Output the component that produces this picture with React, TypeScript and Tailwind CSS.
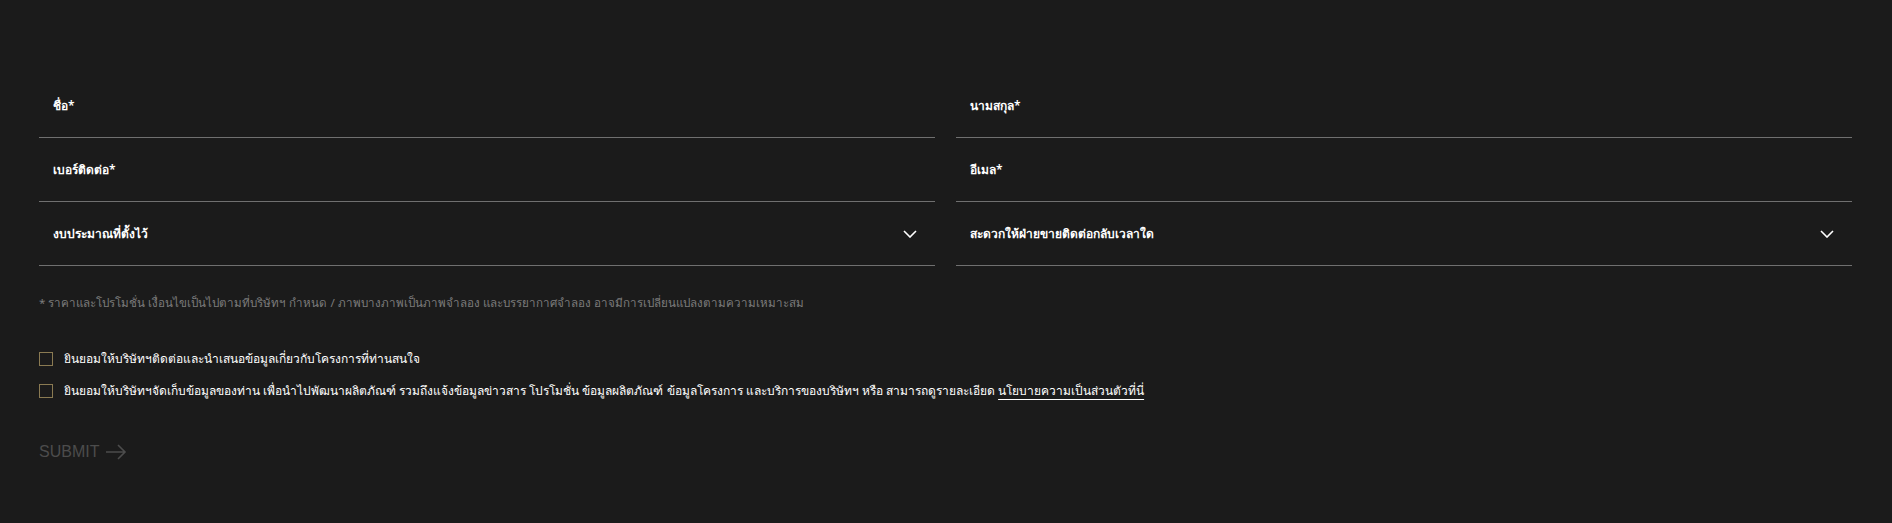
import React from 'react';

const fields = [
  { label: 'ชื่อ*', select: false },
  { label: 'นามสกุล*', select: false },
  { label: 'เบอร์ติดต่อ*', select: false },
  { label: 'อีเมล*', select: false },
  { label: 'งบประมาณที่ตั้งไว้', select: true },
  { label: 'สะดวกให้ฝ่ายขายติดต่อกลับเวลาใด', select: true },
];

function Chevron() {
  return (
    <svg width="14" height="8" viewBox="0 0 14 8" fill="none" className="shrink-0">
      <path d="M1 1l6 6 6-6" stroke="#ffffff" strokeWidth="1.6" />
    </svg>
  );
}

function Checkbox({ children }: { children: React.ReactNode }) {
  return (
    <label className="flex items-center gap-[11px]">
      <span className="w-[14px] h-[14px] border border-[#8a7a52] shrink-0" />
      <span className="text-[12px] text-white font-medium leading-5">{children}</span>
    </label>
  );
}

export default function App() {
  return (
    <div
      className="min-h-[523px] bg-[#1b1b1b] pl-[39px] pr-[40px] pt-[74px] pb-10"
      style={{ fontFamily: '"Noto Sans", "Liberation Sans", sans-serif' }}
    >
      <div className="grid grid-cols-2 gap-x-[21px]">
        {fields.map((f) => (
          <div
            key={f.label}
            className="h-[64px] border-b border-[#707070] flex items-center justify-between pl-[14px] pr-[18px]"
          >
            <span className="text-[12px] text-white font-semibold">{f.label}</span>
            {f.select && <Chevron />}
          </div>
        ))}
      </div>

      <p className="mt-[27px] text-[11.6px] text-[#7c7c7c] leading-5">
        * ราคาและโปรโมชั่น เงื่อนไขเป็นไปตามที่บริษัทฯ กำหนด / ภาพบางภาพเป็นภาพจำลอง และบรรยากาศจำลอง อาจมีการเปลี่ยนแปลงตามความเหมาะสม
      </p>

      <div className="mt-[36px] flex flex-col gap-3">
        <Checkbox>ยินยอมให้บริษัทฯติดต่อและนำเสนอข้อมูลเกี่ยวกับโครงการที่ท่านสนใจ</Checkbox>
        <Checkbox>
          ยินยอมให้บริษัทฯจัดเก็บข้อมูลของท่าน เพื่อนำไปพัฒนาผลิตภัณฑ์ รวมถึงแจ้งข้อมูลข่าวสาร โปรโมชั่น ข้อมูลผลิตภัณฑ์ ข้อมูลโครงการ และบริการของบริษัทฯ หรือ สามารถดูรายละเอียด{' '}
          <a className="underline underline-offset-4 decoration-white">นโยบายความเป็นส่วนตัวที่นี่</a>
        </Checkbox>
      </div>

      <button
        className="mt-[39px] flex items-center gap-[6px] text-[16px] text-[#4c4c4c] font-medium"
        style={{ fontFamily: '"Liberation Sans", Arial, sans-serif' }}
      >
        SUBMIT
        <svg width="22" height="16" viewBox="0 0 22 16" fill="none">
          <path d="M1 8h19M13 1l7 7-7 7" stroke="#4c4c4c" strokeWidth="1.6" />
        </svg>
      </button>
    </div>
  );
}
